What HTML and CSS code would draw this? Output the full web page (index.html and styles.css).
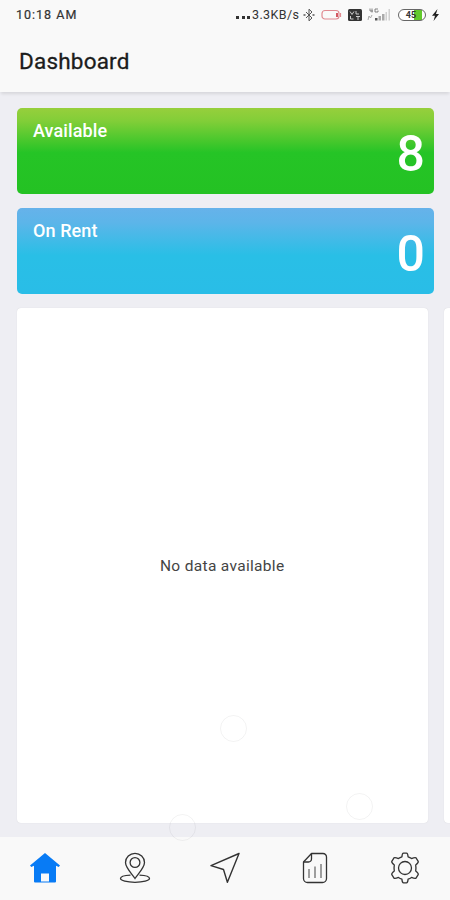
FILE: index.html
```html
<!DOCTYPE html>
<html lang="en">
<head>
    <meta charset="UTF-8">
    <meta name="viewport" content="width=device-width, initial-scale=1.0">
    <title>Dashboard</title>
    <link rel="stylesheet" href="styles.css">
</head>
<body>

    <!-- Status Bar -->
    <div class="status-bar">
        <span class="clock">10:18 AM</span>
        <div class="status-icons">
            <span class="dots"><i></i><i></i><i></i></span>
            <span class="speed">3.3KB/s</span>
            <svg class="bluetooth" width="12" height="14" viewBox="0 0 12 14" fill="none" stroke="#555" stroke-width="1">
                <path d="M3 4l6 6-3 2.800V1.200L9 4 3 10"/>
                <path d="M0.500 7h2M9.500 7h2" stroke-width="1.600"/>
            </svg>
            <svg class="low-battery" width="21" height="12" viewBox="0 0 21 12" fill="none" stroke="#e08a91" stroke-width="1.200">
                <rect x="1" y="1.500" width="17" height="8.500" rx="3"/>
                <path d="M19.500 4v4"/>
                <path d="M16 4v4" stroke="#cf4652" stroke-width="1.800"/>
            </svg>
            <svg class="volte" width="14" height="12" viewBox="0 0 14 12">
                <rect width="14" height="12" rx="1.500" fill="#333"/>
                <path d="M2 2.500l2 3 2-3M8 2v3h3M2.500 7v3h3M8 7.500h4M10 7.500V11" fill="none" stroke="#ddd" stroke-width="0.900"/>
            </svg>
            <svg class="signal" width="24" height="13" viewBox="0 0 24 13">
                <path d="M3 0.500v2.500h3M5 0.500v4M11 1H8v3h3V2.500" fill="none" stroke="#777" stroke-width="0.900"/>
                <path d="M1 12l1-4 1.500 2 1.500-3" fill="none" stroke="#aaa"/>
                <path d="M8 12.500V10h2.500v2.500z" fill="#555"/>
                <path d="M11.500 12.500V8H14v4.500zM15 12.500V6h2.500v6.500z" fill="#aaa"/>
                <path d="M18.500 12.500V4H20v8.500zM21.500 12.500V1H23v11.500z" fill="#d0d0d0"/>
            </svg>
            <span class="battery"><b>45</b></span>
            <svg class="bolt" width="7" height="12" viewBox="0 0 7 12" fill="#222">
                <path d="M5.500 0L0 6.800h3L1.500 12 7 5H4z"/>
            </svg>
        </div>
    </div>

    <!-- Header -->
    <header class="header">
        <h1>Dashboard</h1>
    </header>

    <!-- Content -->
    <main class="content">
        <div class="stat available">
            <span class="label">Available</span>
            <span class="count">8</span>
        </div>
        <div class="stat rent">
            <span class="label">On Rent</span>
            <span class="count">0</span>
        </div>
        <div class="slides">
            <div class="slide">No data available</div>
            <div class="slide next"></div>
        </div>
    </main>

    <!-- Floating bubbles -->
    <span class="bubble bubble-one"></span>
    <span class="bubble bubble-two"></span>
    <span class="bubble bubble-three"></span>

    <!-- Bottom Tabs -->
    <nav class="tabs">
        <a class="tab active">
            <svg width="32" height="32" viewBox="0 0 32 32" fill="#087bf5">
                <path fill-rule="evenodd" d="M16 1L1 13.500l1.300 1.500L5 13.800v15.700q0 1 1 1H26q1 0 1-1V13.800l2.700 1.200 1.300-1.500zM12 21.500h8v8h-8z"/>
            </svg>
        </a>
        <a class="tab">
            <svg width="32" height="32" viewBox="0 0 32 32" fill="none" stroke="#333" stroke-width="1.300">
                <path d="M16 26.500C12.500 21.500 6.500 15.500 6.500 10.500a9.500 9.200 0 0 1 19 0c0 5-6 11-9.500 16z"/>
                <circle cx="16" cy="10.500" r="4.900"/>
                <path d="M11.500 23.200C5.500 23.400 1.500 24.800 1.500 26.600c0 2 6.500 3.700 14.500 3.700s14.500-1.700 14.500-3.700c0-1.800-4-3.200-10-3.400"/>
            </svg>
        </a>
        <a class="tab">
            <svg width="32" height="32" viewBox="0 0 32 32" fill="none" stroke="#333" stroke-width="1.400" stroke-linejoin="round">
                <path d="M30 1.500L2 13.700l12.500 3.800 3.900 12.800z"/>
            </svg>
        </a>
        <a class="tab">
            <svg width="32" height="32" viewBox="0 0 32 32" fill="none" stroke="#333" stroke-width="1.300" stroke-linejoin="round">
                <path d="M12.500 1.500H24a3.500 3.500 0 0 1 3.500 3.500v21.500a4 4 0 0 1-4 4h-15a4 4 0 0 1-4-4V10z"/>
                <path d="M12.500 1.500V7a3 3 0 0 1-3 3h-5"/>
                <path d="M10 17v9M16 14.500V26M22 12v14" stroke="#888" stroke-width="1.600"/>
            </svg>
        </a>
        <a class="tab">
            <svg width="32" height="32" viewBox="0 0 32 32" fill="none" stroke="#333" stroke-width="1.300" stroke-linejoin="round">
                <path d="M12.900 4.900Q13.200 1.200 14.500 1.200h3Q18.800 1.200 19.100 4.900 21 5.500 22.500 6.600 26 5 27 5.800l2.200 3.500Q29.800 10.600 26.700 12.900q.5 3.100 0 6.200Q29.800 21.400 29.200 22.700L27 26.200Q26 27 22.500 25.400 21 26.500 19.100 27.100 18.800 30.800 17.500 30.800h-3Q13.200 30.800 12.900 27.100 11 26.500 9.500 25.400 6 27 5 26.200L2.800 22.700Q2.200 21.400 5.300 19.100q-.5-3.100 0-6.200Q2.200 10.600 2.800 9.300L5 5.800Q6 5 9.500 6.600 11 5.500 12.900 4.900z"/>
                <circle cx="16" cy="16" r="6.500"/>
            </svg>
        </a>
    </nav>

</body>
</html>
```
FILE: styles.css
```css
* {
    margin: 0;
    padding: 0;
    box-sizing: border-box;
}
body {
    display: flex;
    flex-direction: column;
    position: relative;
    height: 100vh;
    overflow: hidden;
    background: #eeeef3;
    font-family: Roboto, "Liberation Sans", sans-serif;
}
.status-bar {
    display: flex;
    justify-content: space-between;
    align-items: center;
    height: 30px;
    padding: 0 11px 1px 16px;
    background: #f9f9f9;
    color: #333;
    font-size: 12.5px;
}
.clock {
    letter-spacing: 1px;
    -webkit-text-stroke: 0.2px #333;
}
.status-icons {
    display: flex;
    align-items: center;
}
.dots {
    display: flex;
    gap: 2.500px;
    margin: 6px 2px 0 0;
}
.dots i {
    width: 3px;
    height: 3px;
    background: #333;
}
.speed {
    width: 47px;
    letter-spacing: 0.4px;
    white-space: nowrap;
}
.bluetooth { margin-left: 4px; }
.low-battery { margin-left: 6px; }
.volte { margin-left: 6px; }
.signal { margin-left: 5px; }
.battery {
    width: 28px;
    height: 12px;
    margin-left: 7px;
    padding-right: 2px;
    border: 1.500px solid #666;
    border-radius: 6px;
    background: linear-gradient(90deg, #fff 56%, #62c92c 56%, #62c92c 90%, #fff 90%);
    text-align: center;
    font-size: 9px;
    line-height: 10px;
}
.bolt { margin-left: 6px; }
.header {
    height: 62px;
    margin-bottom: 1px;
    padding: 17px 19px 0;
    background: #f9f9f9;
    box-shadow: 0 3px 3px -1px rgba(0, 0, 0, 0.1);
}
.header h1 {
    color: #1c1c1c;
    font-size: 22.5px;
    font-weight: 400;
    line-height: 28px;
    letter-spacing: 0.2px;
    -webkit-text-stroke: 0.3px #1c1c1c;
}
.content {
    flex: 1;
    padding: 15px 0 0 16.5px;
    overflow: hidden;
}
.stat {
    display: flex;
    justify-content: space-between;
    height: 86px;
    margin: 0 16px 14px 0;
    padding: 12px 9px 0 16.5px;
    border-radius: 5px;
    color: white;
}
.available {
    background: linear-gradient(#97cf3c 0%, #82ce38 15%, #25c426 52%, #24c223 100%);
}
.rent {
    background: linear-gradient(#66b2ea 0%, #5cb5e9 17%, #29bfe6 55%, #29bde7 100%);
}
.label {
    font-size: 18px;
    font-weight: 500;
    line-height: 22px;
    letter-spacing: 0.1px;
}
.count {
    padding-top: 6px;
    font-size: 50px;
    font-weight: 500;
    line-height: 56px;
}
.slides {
    display: flex;
    gap: 16px;
}
.slide {
    flex: 0 0 411.5px;
    display: flex;
    justify-content: center;
    align-items: center;
    height: 515px;
    border-radius: 4px;
    background: white;
    box-shadow: 0 0 1px rgba(0, 0, 0, 0.15);
    color: #444;
    font-size: 15.5px;
    letter-spacing: 0.32px;
}
.slide.next {
    flex: 1;
    border-radius: 4px 0 0 4px;
}
.bubble {
    position: absolute;
    width: 27px;
    height: 27px;
    border: 1.500px solid rgba(0, 0, 20, 0.05);
    border-radius: 50%;
}
.bubble-one {
    left: 220px;
    top: 715px;
}
.bubble-two {
    left: 346px;
    top: 793px;
}
.bubble-three {
    left: 169px;
    top: 814px;
}
.tabs {
    display: flex;
    height: 63px;
    background: #f9f9f9;
}
.tab {
    flex: 1;
    display: flex;
    justify-content: center;
    align-items: center;
    padding-bottom: 1px;
}
```
